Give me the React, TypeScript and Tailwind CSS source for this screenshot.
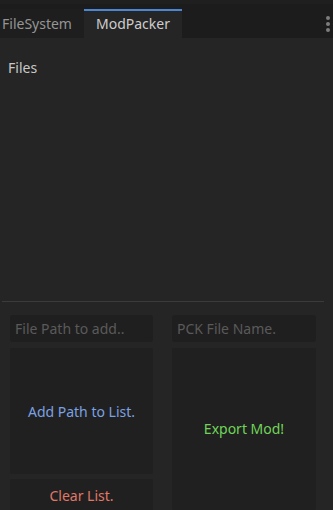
import React from "react";

export default function App() {
  return (
    <div
      className="w-[333px] h-[510px] bg-[#252525] overflow-hidden relative text-[14px]"
      style={{ fontFamily: '"Noto Sans", "Open Sans", sans-serif' }}
    >
      {/* tab bar */}
      <div className="h-[38px] bg-[#1c1c1c] border-t-[4px] border-[#1f1f1f] flex items-end relative">
        <div className="h-[29px] w-[84px] bg-[#1e1e1e] flex items-center pl-[2px] text-[#959595] leading-none">
          FileSystem
        </div>
        <div className="h-[29px] w-[98px] bg-[#252525] border-t-[2px] border-[#4a86d4] flex items-center justify-center text-[#cdcdcd] leading-none pb-[2px]">
          ModPacker
        </div>
        <div className="absolute right-[3px] top-[12px] flex flex-col gap-[2px]">
          <div className="w-[4px] h-[4px] rounded-full bg-[#7d7d7d]" />
          <div className="w-[4px] h-[4px] rounded-full bg-[#7d7d7d]" />
          <div className="w-[4px] h-[4px] rounded-full bg-[#7d7d7d]" />
        </div>
      </div>

      {/* files area */}
      <div className="h-[263px] px-[8px] pt-[20px]">
        <div className="text-[#c8c8c8] leading-[20px]">Files</div>
      </div>
      <div className="ml-[2px] w-[322px] h-[1px] bg-[#3b3b3b]" />

      {/* bottom grid */}
      <div className="flex gap-[19px] pl-[10px] pt-[13px]">
        <div className="w-[143px] flex flex-col gap-[6px]">
          <div className="h-[27px] rounded-[3px] bg-[#1f1f1f] flex items-center px-[5px] text-[#5a5a5a] leading-none">
            File Path to add..
          </div>
          <div className="h-[126px] bg-[#202020] rounded-[2px] flex items-center justify-center text-[#7ca0e2]">
            Add Path to List.
          </div>
          <div className="h-[40px] bg-[#202020] rounded-[2px] flex justify-center pt-[6px] text-[#e07868] mt-[-1px]">
            Clear List.
          </div>
        </div>
        <div className="w-[144px] flex flex-col gap-[6px]">
          <div className="h-[27px] rounded-[3px] bg-[#1f1f1f] flex items-center px-[5px] text-[#5a5a5a] leading-none">
            PCK File Name.
          </div>
          <div className="h-[162px] bg-[#202020] rounded-[2px] flex justify-center pt-[70px] text-[#70d459]">
            Export Mod!
          </div>
        </div>
      </div>
    </div>
  );
}
